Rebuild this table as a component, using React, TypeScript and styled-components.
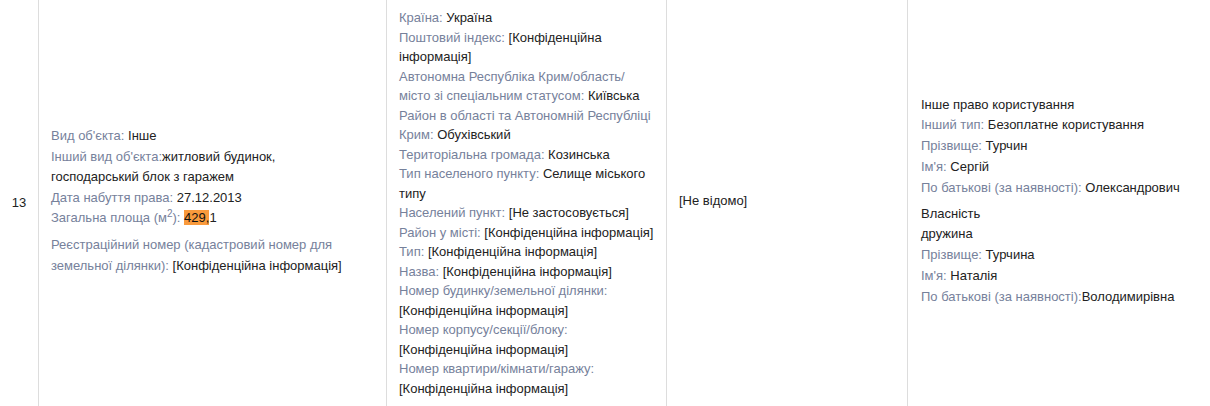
import React from "react";
import styled, { createGlobalStyle } from "styled-components";

const Global = createGlobalStyle`
  html, body { margin: 0; padding: 0; background: #fff; }
  body { font-family: "Liberation Sans", Arial, sans-serif; font-size: 13px; color: #222; }
`;

const Row = styled.div`
  display: grid;
  grid-template-columns: 38px 348px 280px 241px 1fr;
  align-items: stretch;
  width: 1210px;
  min-height: 406px;
`;

const Cell = styled.div<{ $first?: boolean; $pad?: number; $bottom?: number }>`
  display: flex;
  flex-direction: column;
  justify-content: center;
  border-left: ${(p) => (p.$first ? "none" : "1px solid #dddddd")};
  padding: 8px 12px ${(p) => p.$bottom ?? 12}px ${(p) => p.$pad ?? 12}px;
  box-sizing: border-box;
`;

const NumCell = styled(Cell)`
  align-items: center;
  padding: 0;
  line-height: 20px;
`;

const Block = styled.div<{ $lh: number; $gap?: number }>`
  line-height: ${(p) => p.$lh}px;
  margin-top: ${(p) => p.$gap ?? 0}px;
`;

const Line = styled.div``;

const Label = styled.span`
  color: #76819b;
`;

const Value = styled.span`
  color: #222;
`;

const Mark = styled.span`
  background: #f99a3c;
  color: #111;
`;

const Sup = styled.sup`
  font-size: 10px;
  line-height: 0;
  vertical-align: 5px;
`;

const Address = styled.div`
  line-height: 19.5px;
  width: 257px;
`;

export default function App() {
  return (
    <>
      <Global />
      <Row>
        <NumCell $first>13</NumCell>
        <Cell>
          <Block $lh={20.5}>
            <Line>
              <Label>Вид об'єкта: </Label>
              <Value>Інше</Value>
            </Line>
            <Line>
              <Label>Інший вид об'єкта:</Label>
              <Value>
                житловий будинок,
                <br />
                господарський блок з гаражем
              </Value>
            </Line>
            <Line>
              <Label>Дата набуття права: </Label>
              <Value>27.12.2013</Value>
            </Line>
            <Line>
              <Label>
                Загальна площа (м<Sup>2</Sup>):{" "}
              </Label>
              <Value>
                <Mark>429,</Mark>1
              </Value>
            </Line>
          </Block>
          <Block $lh={20.5} $gap={6.5}>
            <Label>Реєстраційний номер (кадастровий номер для земельної ділянки): </Label>
            <Value>[Конфіденційна інформація]</Value>
          </Block>
        </Cell>
        <Cell $bottom={8}>
          <Address>
            <Line>
              <Label>Країна: </Label>
              <Value>Україна</Value>
            </Line>
            <Line>
              <Label>Поштовий індекс: </Label>
              <Value>[Конфіденційна інформація]</Value>
            </Line>
            <Line>
              <Label>Автономна Республіка Крим/область/ місто зі спеціальним статусом: </Label>
              <Value>Київська</Value>
            </Line>
            <Line>
              <Label>Район в області та Автономній Республіці Крим: </Label>
              <Value>Обухівський</Value>
            </Line>
            <Line>
              <Label>Територіальна громада: </Label>
              <Value>Козинська</Value>
            </Line>
            <Line>
              <Label>Тип населеного пункту: </Label>
              <Value>Селище міського типу</Value>
            </Line>
            <Line>
              <Label>Населений пункт: </Label>
              <Value>[Не застосовується]</Value>
            </Line>
            <Line>
              <Label>Район у місті: </Label>
              <Value>[Конфіденційна інформація]</Value>
            </Line>
            <Line>
              <Label>Тип: </Label>
              <Value>[Конфіденційна інформація]</Value>
            </Line>
            <Line>
              <Label>Назва: </Label>
              <Value>[Конфіденційна інформація]</Value>
            </Line>
            <Line>
              <Label>Номер будинку/земельної ділянки: </Label>
              <Value>[Конфіденційна інформація]</Value>
            </Line>
            <Line>
              <Label>Номер корпусу/секції/блоку: </Label>
              <Value>[Конфіденційна інформація]</Value>
            </Line>
            <Line>
              <Label>Номер квартири/кімнати/гаражу: </Label>
              <Value>[Конфіденційна інформація]</Value>
            </Line>
          </Address>
        </Cell>
        <Cell>
          <Block $lh={20}>
            <Value>[Не відомо]</Value>
          </Block>
        </Cell>
        <Cell $pad={13}>
          <Block $lh={20.7}>
            <Line>
              <Value>Інше право користування</Value>
            </Line>
            <Line>
              <Label>Інший тип: </Label>
              <Value>Безоплатне користування</Value>
            </Line>
            <Line>
              <Label>Прізвище: </Label>
              <Value>Турчин</Value>
            </Line>
            <Line>
              <Label>Ім'я: </Label>
              <Value>Сергій</Value>
            </Line>
            <Line>
              <Label>По батькові (за наявності): </Label>
              <Value>Олександрович</Value>
            </Line>
          </Block>
          <Block $lh={20.7} $gap={5.5}>
            <Line>
              <Value>Власність</Value>
            </Line>
            <Line>
              <Value>дружина</Value>
            </Line>
            <Line>
              <Label>Прізвище: </Label>
              <Value>Турчина</Value>
            </Line>
            <Line>
              <Label>Ім'я: </Label>
              <Value>Наталія</Value>
            </Line>
            <Line>
              <Label>По батькові (за наявності):</Label>
              <Value>Володимирівна</Value>
            </Line>
          </Block>
        </Cell>
      </Row>
    </>
  );
}
